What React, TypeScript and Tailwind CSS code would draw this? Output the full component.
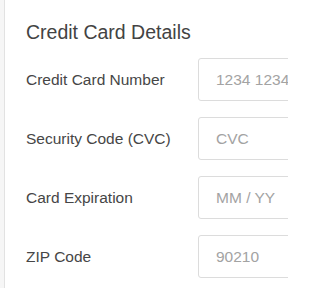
import React from "react";

const rows = [
  { label: "Credit Card Number", placeholder: "1234 1234 1234 1234" },
  { label: "Security Code (CVC)", placeholder: "CVC" },
  { label: "Card Expiration", placeholder: "MM / YY" },
  { label: "ZIP Code", placeholder: "90210" },
];

export default function App() {
  return (
    <div
      className="flex h-[288px] w-[288px] overflow-hidden bg-white"
      style={{ fontFamily: '"Liberation Sans", Arial, sans-serif' }}
    >
      <div className="w-[4px] shrink-0 bg-[#f6f6f6]" />
      <div className="w-[1px] shrink-0 bg-[#e2e2e2]" />
      <div className="flex min-w-0 flex-1 flex-col pl-[21px] pt-[20px]">
        <h2 className="text-[19.5px] leading-[24px] text-[#434343] whitespace-nowrap">
          Credit Card Details
        </h2>
        <div className="mt-[14px] flex flex-col gap-[16px]">
          {rows.map((r) => (
            <div key={r.label} className="flex items-center">
              <label className="w-[172px] shrink-0 text-[15.5px] text-[#464646] whitespace-nowrap">
                {r.label}
              </label>
              <input
                readOnly
                placeholder={r.placeholder}
                className="h-[43px] w-[200px] shrink-0 rounded-[3px] border border-[#dcdcdc] bg-white pl-[17px] text-[15.5px] outline-none placeholder:text-[#a3a3a3]"
                style={{ fontFamily: '"Liberation Sans", Arial, sans-serif' }}
              />
            </div>
          ))}
        </div>
      </div>
    </div>
  );
}
